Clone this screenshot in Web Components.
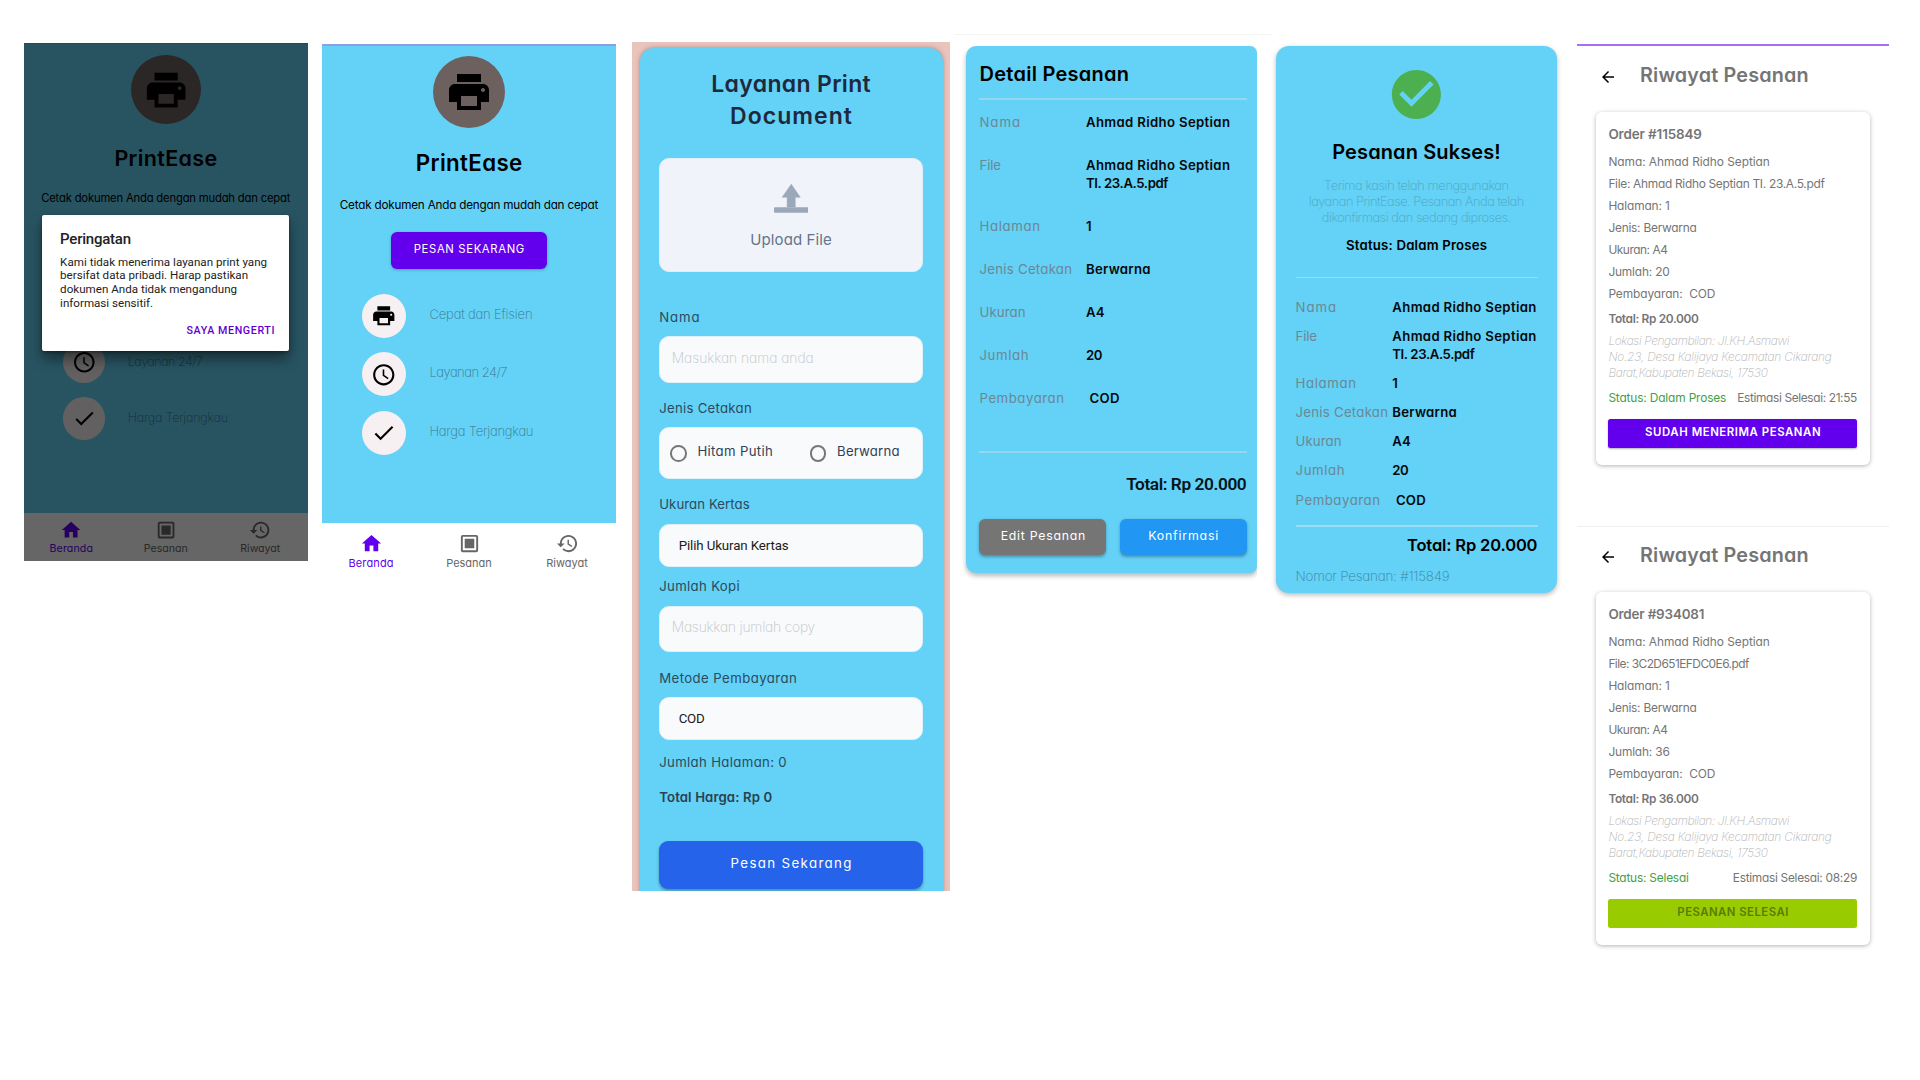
<!DOCTYPE html>
<html lang="id">
<head>
<meta charset="utf-8">
<title>PrintEase</title>
<style>
html, body { margin: 0; background: #fff; }
body { width: 1920px; height: 1080px; overflow: hidden; font-family: Inter, "Open Sans", sans-serif; font-feature-settings: "cv11"; color: #000; }
main { display: flex; align-items: flex-start; height: 1080px; }
</style>
</head>
<body>
<main>
  <ease-home dimmed></ease-home>
  <ease-home></ease-home>
  <order-form></order-form>
  <order-detail></order-detail>
  <order-success></order-success>
  <history-column></history-column>
</main>
<script>
const ICONS = {
  print: '<path d="M19 8H5c-1.66 0-3 1.34-3 3v6h4v4h12v-4h4v-6c0-1.66-1.34-3-3-3zm-3 11H8v-5h8v5zm3-7c-.55 0-1-.45-1-1s.45-1 1-1 1 .45 1 1-.45 1-1 1zm-1-9H6v4h12V3z"/>',
  clock: '<path d="M11.99 2C6.47 2 2 6.48 2 12s4.47 10 9.99 10C17.52 22 22 17.52 22 12S17.52 2 11.99 2zM12 20c-4.42 0-8-3.58-8-8s3.58-8 8-8 8 3.58 8 8-3.58 8-8 8zm.5-13H11v6l4.8 3.2.8-1.2-4.1-2.7z"/>',
  check: '<path d="M9 16.17L4.83 12l-1.42 1.41L9 19 21 7l-1.41-1.41z"/>',
  home: '<path d="M10 20v-6h4v6h5v-8h3L12 3 2 12h3v8z"/>',
  box: '<path fill-rule="evenodd" d="M5 3h14a2 2 0 0 1 2 2v14a2 2 0 0 1-2 2H5a2 2 0 0 1-2-2V5a2 2 0 0 1 2-2zm0 2v14h14V5zm2 2h10v10H7z"/>',
  history: '<path d="M13 3c-4.97 0-9 4.03-9 9H1l3.89 3.89.07.14L9 12H6c0-3.87 3.13-7 7-7s7 3.13 7 7-3.13 7-7 7c-1.93 0-3.68-.79-4.94-2.06l-1.42 1.42C8.27 19.99 10.51 21 13 21c4.97 0 9-4.03 9-9s-4.03-9-9-9zm-1 5v5l4.28 2.54.72-1.21-3.5-2.08V8H12z"/>',
  done: '<path d="M12 2C6.48 2 2 6.48 2 12s4.48 10 10 10 10-4.48 10-10S17.52 2 12 2zm-2 15l-5-5 1.41-1.41L10 14.17l7.59-7.59L19 8l-9 9z"/>',
  back: '<path d="M20 11H7.83l5.59-5.59L12 4l-8 8 8 8 1.41-1.41L7.83 13H20v-2z"/>'
};
const icon = (n, s) => `<svg width="${s}" height="${s}" viewBox="0 0 24 24" fill="currentColor">${ICONS[n]}</svg>`;

/* One line of text: --d is the distance from the item above to the baseline,
   w is the width the line is tracked to. */
class FitText extends HTMLElement {
  connectedCallback() {
    if (this.shadowRoot) return;
    this.attachShadow({mode: 'open'}).innerHTML = `<style>
      :host { display: block; flex: none; align-self: flex-start; white-space: pre; line-height: 1.2;
        margin: calc(var(--d, 0px) + var(--nudge, 0px) - var(--bl, .964) * 1em) 0 calc((var(--bl, .964) - 1.2) * 1em - var(--nudge, 0px)); }
      :host([c]) { align-self: center; } :host([r]) { align-self: flex-end; }
      </style><span><slot></slot></span>`;
    const w = +this.getAttribute('w');
    if (!w) return;
    const span = this.shadowRoot.querySelector('span');
    const zoom = this.currentCSSZoom || 1;
    const ls = (w - span.getBoundingClientRect().width / zoom) / (this.textContent.length - 1);
    span.style.letterSpacing = ls + 'px';
    span.style.marginRight = -ls + 'px';
  }
}
customElements.define('fit-text', FitText);
const T = (t, w, d, cls = '', al = '') => `<fit-text class="${cls}" ${al} w="${w}" style="--d:${d}px">${t}</fit-text>`;

const BASE = `*,:host{box-sizing:border-box} svg{display:block;flex:none}
  :host,.col{display:flex;flex-direction:column;flex:none}
  .row{display:flex;flex:none;align-items:flex-start}
  .rb{font-family:Roboto,sans-serif;font-feature-settings:normal;--bl:.942}
  .m{font-weight:500}.s{font-weight:600}.t{font-weight:200}`;
const define = (name, css, html) => customElements.define(name, class extends HTMLElement {
  connectedCallback() {
    if (this.shadowRoot) return;
    const body = typeof html === 'function' ? html(this) : html;
    this.attachShadow({mode: 'open'}).innerHTML = `<style>${BASE}${css}</style>${body}`;
  }
});

define('ease-alert', `
  :host{position:absolute;left:18.3px;top:172px;width:246.7px;height:136px;background:#fff;border-radius:2px;
    padding:0 14.5px 0 17.8px;box-shadow:0 8px 14px rgba(0,0,0,.45),0 1px 3px rgba(0,0,0,.4);color:#222}
  .h{font-size:15px;font-weight:500}.b{font-size:11.6px}.a{font-size:10.7px;font-weight:500;color:#6200cf}`,
  T('Peringatan', 71, 29.3, 'rb h') + T('Kami tidak menerima layanan print yang', 207, 22, 'rb b') +
  T('bersifat data pribadi. Harap pastikan', 188, 13.7, 'rb b') + T('dokumen Anda tidak mengandung', 177, 13.7, 'rb b') +
  T('informasi sensitif.', 93, 13.7, 'rb b') + T('SAYA MENGERTI', 88, 28, 'rb a', 'r'));

const feat = (ic, t, w, cls = '') => `<div class="feat row ${cls}"><div class="dot">${icon(ic, 25.5)}</div>${T(t, w, 25.3, 't f')}</div>`;
const nav = (ic, t, w, cls = '') => `<div class="nav col ${cls}">${icon(ic, 23)}${T(t, w, 11.8, 'n', 'c')}</div>`;
define('ease-home', `
  :host{position:relative;width:294px;margin:44px 0 0 14.5px;--nudge:.4px}
  :host([dimmed]){width:283.5px;margin:43px 0 0 24px;--nudge:.6px}
  .screen{width:294px;background:#64d1f6;border-top:2px solid #8f9fe6}
  :host([dimmed]) .screen{zoom:.9645}
  .body{height:476.7px;align-items:center}
  :host([dimmed]) .body{height:486px;padding-top:1px}
  .logo{margin-top:10px;width:72px;height:72px;border-radius:50%;background:#6d6160;display:grid;place-items:center;flex:none}
  :host([dimmed]) .logo{margin-top:10.4px}
  .title{font-size:22.3px;font-weight:600}.sub{font-size:11.7px}
  .btn{margin-top:23.7px;width:155.4px;height:36.7px;border-radius:6px;background:#6200ee;color:#fff;font-size:11.3px;box-shadow:0 1px 3px rgba(0,0,0,.25);flex:none}
  .list{width:100%;padding:25px 0 0 40px;gap:14.5px}
  .dot{width:44px;height:44px;border-radius:50%;background:#f6f0f3;display:grid;place-items:center;margin-right:23.5px}
  .f{font-size:13px;color:#35788f}.n{font-size:11px}
  .bar{background:#fff;height:54px;padding-top:9.4px}
  .nav{width:98px;align-items:center;color:#666}.nav.on{color:#6200ee}
  :host([dimmed]) .bar{height:50px;padding-top:6.6px}
  :host([dimmed]) .hid{visibility:hidden}
  .veil{position:absolute;inset:0;background:rgba(0,0,0,.6)}
  ease-alert{--nudge:.2px}`,
  el => `<div class="screen col"><div class="body col"><div class="logo">${icon('print', 48)}</div>
  ${T('PrintEase', 106.5, 43, 'title', 'c')}${T('Cetak dokumen Anda dengan mudah dan cepat', 258.5, 37.4, 'sub', 'c')}
  ${el.hasAttribute('dimmed') ? '<div class="btn"></div>' : `<div class="btn col">${T('PESAN SEKARANG', 110.5, 21.3, '', 'c')}</div>`}
  <div class="list col">${el.hasAttribute('dimmed') ? '<div class="row hid"><div class="dot"></div></div>' : feat('print', 'Cepat dan Efisien', 103)}${feat('clock', 'Layanan 24/7', 78)}${feat('check', 'Harga Terjangkau', 104)}</div></div>
  <div class="bar row">${nav('home', 'Beranda', 45, 'on')}${nav('box', 'Pesanan', 45.5)}${nav('history', 'Riwayat', 41.5)}</div></div>
  ${el.hasAttribute('dimmed') ? '<div class="veil"></div><ease-alert></ease-alert>' : ''}`);

define('order-form', `
  :host{width:318px;height:849px;margin:42px 0 0 16px;background:#e9c3bc;overflow:hidden;padding:6px 7.5px 0}
  .card{height:860px;border-radius:14px 14px 0 0;background:#64d1f6;padding:0 19.7px;box-shadow:0 0 4px rgba(90,60,60,.45);color:#334155}
  .h{font-size:23px;font-weight:600;color:#1e293b;--nudge:.9px}
  .up{margin-top:33.3px;height:113.7px;border-radius:10px;background:#f0f3f9;align-items:center;padding-top:25px;color:#64748b;border:1px solid #e2edf6}
  .uf{font-size:15px}.l{font-size:13.2px;color:#2b4a5e}.b{color:#2b4252}
  .in{border-radius:10px;background:#f8fafc;border:1px solid #def0f8;padding-left:11.5px}
  .sel{padding-left:18.5px;color:#1b1b1b;font-size:13.3px}
  .ph{font-size:13.8px;font-weight:200;color:#bfc4c8}
  .radio{width:16.6px;height:16.6px;border:2px solid #777;border-radius:50%;margin-top:17px;flex:none}
  .rl{font-size:13.2px}
  .go{margin-top:38.7px;height:48px;border-radius:9px;background:#2563eb;color:#fff;font-size:13.3px;box-shadow:0 2px 3px rgba(0,0,0,.3)}`,
  `<div class="card col">${T('Layanan Print', 159.5, 44.7, 'h', 'c')}${T('Document', 122, 32, 'h', 'c')}
  <div class="up col"><svg width="34.6" height="29" viewBox="0 0 34.6 29" fill="#9ba8b9"><path d="M17.3.3 26.2 13.2H21.2V23H13.2V13.2H8.2z" stroke="#9ba8b9" stroke-width=".6" stroke-linejoin="round"/><rect y="23.3" width="34.6" height="5.4" rx="1"/></svg>${T('Upload File', 81.5, 32, 'uf', 'c')}</div>
  ${T('Nama', 40.5, 50.6, 'l')}<div class="in col" style="margin-top:13.7px;height:46.6px">${T('Masukkan nama anda', 142, 26, 'ph')}</div>
  ${T('Jenis Cetakan', 92.5, 31, 'l')}<div class="in row" style="margin-top:13.7px;height:52px;padding-left:10px"><div class="radio"></div><div style="width:10.6px;flex:none"></div>${T('Hitam Putih', 75.5, 28, 'rl')}<div style="width:37px;flex:none"></div><div class="radio"></div><div style="width:10.6px;flex:none"></div>${T('Berwarna', 62.5, 28, 'rl')}</div>
  ${T('Ukuran Kertas', 90.5, 30.3, 'l')}<div class="in sel col" style="margin-top:14px;height:43.4px">${T('Pilih Ukuran Kertas', 110, 26.4, 'rb')}</div>
  ${T('Jumlah Kopi', 80.5, 25, 'l')}<div class="in col" style="margin-top:13.6px;height:46.7px">${T('Masukkan jumlah copy', 143.5, 26, 'ph')}</div>
  ${T('Metode Pembayaran', 137.5, 31, 'l')}<div class="in sel col" style="margin-top:13.7px;height:43.3px">${T('COD', 26, 26, 'rb')}</div>
  ${T('Jumlah Halaman: 0', 127.5, 27.3, 'l')}${T('Total Harga: Rp 0', 113, 35, 'l s b')}
  <div class="go col">${T('Pesan Sekarang', 121, 27.3, '', 'c')}</div></div>`);

const W = {Nama: 40.5, File: 21.5, Halaman: 60.5, 'Jenis Cetakan': 92.5, Ukuran: 46, Jumlah: 49, Pembayaran: 84.5};
const rows = ds => {
  const vals = [[['Ahmad Ridho Septian', 144]], [['Ahmad Ridho Septian', 144], ['TI. 23.A.5.pdf', 82.5]], [['1', 0]], [['Berwarna', 64.5]], [['A4', 18.5]], [['20', 16.5]], [[' COD', 33.5]]];
  return Object.keys(W).map((k, i) => `<div class="row"><div class="lab col">${T(k, W[k], ds[i], 'k')}</div><div class="col">${vals[i].map((v, j) => T(v[0], v[1], j ? 18 : ds[i], 'v')).join('')}</div></div>`).join('');
};
const ROWCSS = `:host{--nudge:.5px}.k{font-size:13.2px;color:#6b8794}.v{font-size:13.2px;font-weight:600;color:#06090b}`;

define('order-detail', `${ROWCSS}
  :host{width:318px;height:560px;margin:34px 0 0 4px;border-top:1px solid #f4f4f2;padding-top:10.5px}
  .clip{overflow:hidden;width:303px;height:545px;padding-left:12.3px}
  .card{width:291px;height:527.3px;border-radius:10px 7px 7px 10px;background:#64d1f6;padding:0 10.6px 0 13.2px;box-shadow:0 3px 5px rgba(0,0,0,.28)}
  .h{font-size:20px;font-weight:600}.lab{width:106.5px}
  .hr{height:1.6px;background:#95d8ee;flex:none}
  .tot{font-size:17.3px;font-weight:600;color:#06141b;--nudge:0px}
  .btn{width:127px;height:36.3px;border-radius:6px;background:#757575;color:#fff;font-size:12.3px;box-shadow:0 1.5px 3px rgba(0,0,0,.3)}`,
  `<div class="clip"><div class="card col">${T('Detail Pesanan', 149.5, 34.8, 'h')}<div class="hr" style="margin-top:18.2px"></div>
  ${rows([27, 43, 43, 43, 43, 43, 43])}<div class="hr" style="margin-top:48.3px"></div>${T('Total: Rp 20.000', 120.5, 37.8, 'rb tot', 'r')}
  <div class="row" style="margin-top:28.2px;justify-content:space-between"><div class="btn col">${T('Edit Pesanan', 84.5, 21, '', 'c')}</div><div class="btn col" style="background:#2196f3">${T('Konfirmasi', 70, 21, '', 'c')}</div></div></div></div>`);

define('order-success', `${ROWCSS}
  :host{width:281px;height:547px;margin:45.5px 0 0 4px;border-radius:13px;background:#64d1f6;padding:19.5px 19.5px 0;box-shadow:0 2px 5px rgba(0,0,0,.28)}
  .ok{align-self:center;color:#4caf50;margin:0}
  .h{font-size:20px;font-weight:600}.p{font-size:12.8px;font-weight:200;color:#4ea5c0;--nudge:0px}
  .st{font-size:13.2px;font-weight:600;--nudge:1px}.lab{width:96.8px}
  .hr{height:1.4px;background:#9bdcf1;flex:none}
  .tot{font-size:16.5px;font-weight:600}.no{font-size:13.4px;font-weight:200;color:#39849d;--nudge:0px}`,
  `<div class="ok">${icon('done', 58.8)}</div>${T('Pesanan Sukses!', 168.5, 34.9, 'h', 'c')}
  ${T('Terima kasih telah menggunakan', 185, 31.3, 'p', 'c')}${T('layanan PrintEase. Pesanan Anda telah', 215.5, 16.3, 'p', 'c')}${T('dikonfirmasi dan sedang diproses.', 189.5, 16.4, 'p', 'c')}
  ${T('Status: Dalam Proses', 141, 26.6, 'st', 'c')}<div class="hr" style="margin-top:27.5px"></div>
  ${rows([33.8, 29, 29.3, 29, 29.3, 29, 29.3])}<div class="hr" style="margin-top:20.4px"></div>
  ${T('Total: Rp 20.000', 130.5, 24.5, 'tot', 'r')}${T('Nomor Pesanan: #115849', 154, 30.2, 'no')}`);

define('history-screen', `
  :host{width:311.5px;height:480px;border-top:2px solid #a66ff5;color:#757575}
  :host([plain]){border-top:1px solid #efefef}
  .head{padding-left:21.5px}.back{color:#000;margin:22px 23.5px 0 0}
  :host([plain]) .back{margin-top:21px}
  .h{font-size:19.8px;font-weight:600}
  .card{margin:30px 0 0 18.7px;width:274.3px;height:353px;border-radius:6px;background:#fff;box-shadow:0 1px 4px rgba(0,0,0,.3);padding:0 12.7px}
  .o{font-size:13.4px;font-weight:600}.l{font-size:11.9px}.b{font-size:11.9px;font-weight:600}
  .i{font-size:11.9px;font-style:italic;font-weight:200;color:#b3b3b3}
  .g{color:#43a047}
  .btn{margin-top:17.3px;height:28.7px;border-radius:2.5px;background:#6200ee;color:#fff;font-size:11.4px;font-weight:600;box-shadow:0 1px 2px rgba(0,0,0,.3)}
  :host([plain]) .btn{background:#99cc00;color:#5c7b05;box-shadow:none}`,
  el => {
    const p = el.hasAttribute('plain');
    return `<div class="head row" style="height:${p ? 35 : 36}px"><div class="back">${icon('back', 18)}</div>${T('Riwayat Pesanan', 168.5, p ? 36 : 37, 'h')}</div>
    <div class="card col">${T(p ? 'Order #934081' : 'Order #115849', p ? 96 : 93.5, 27, 'o')}${T('Nama: Ahmad Ridho Septian', 161.5, 27, 'l')}
    ${p ? T('File: 3C2D651EFDC0E6.pdf', 141, 22, 'l') : T('File: Ahmad Ridho Septian TI. 23.A.5.pdf', 216.5, 22, 'l')}
    ${T('Halaman: 1', 61.5, 22, 'l')}${T('Jenis: Berwarna', 88.5, 22, 'l')}${T('Ukuran: A4', 59.5, 22, 'l')}${T(p ? 'Jumlah: 36' : 'Jumlah: 20', 61.5, 22, 'l')}${T('Pembayaran:&nbsp; COD', 107, 22, 'l')}
    ${T(p ? 'Total: Rp 36.000' : 'Total: Rp 20.000', 90.5, 25, 'b')}
    ${T('Lokasi Pengambilan: Jl.KH.Asmawi', 181, 22, 'i')}${T('No.23, Desa Kalijaya Kecamatan Cikarang', 223.5, 16, 'i')}${T('Barat,Kabupaten Bekasi, 17530', 159.5, 16, 'i')}
    <div class="row" style="justify-content:space-between">${T(p ? 'Status: Selesai' : 'Status: Dalam Proses', p ? 80.5 : 118, 25, 'l g')}${T(p ? 'Estimasi Selesai: 08:29' : 'Estimasi Selesai: 21:55', p ? 124.5 : 120, 25, 'l')}</div>
    <div class="btn col">${p ? T('PESANAN SELESAI', 111, 18, '', 'c') : T('SUDAH MENERIMA PESANAN', 175.5, 18, '', 'c')}</div></div>`;
  });
define('history-column', ':host{margin:44px 0 0 20px;padding:0}history-screen[plain]{margin-top:2px}',
  '<history-screen></history-screen><history-screen plain></history-screen>');
</script>
</body>
</html>
